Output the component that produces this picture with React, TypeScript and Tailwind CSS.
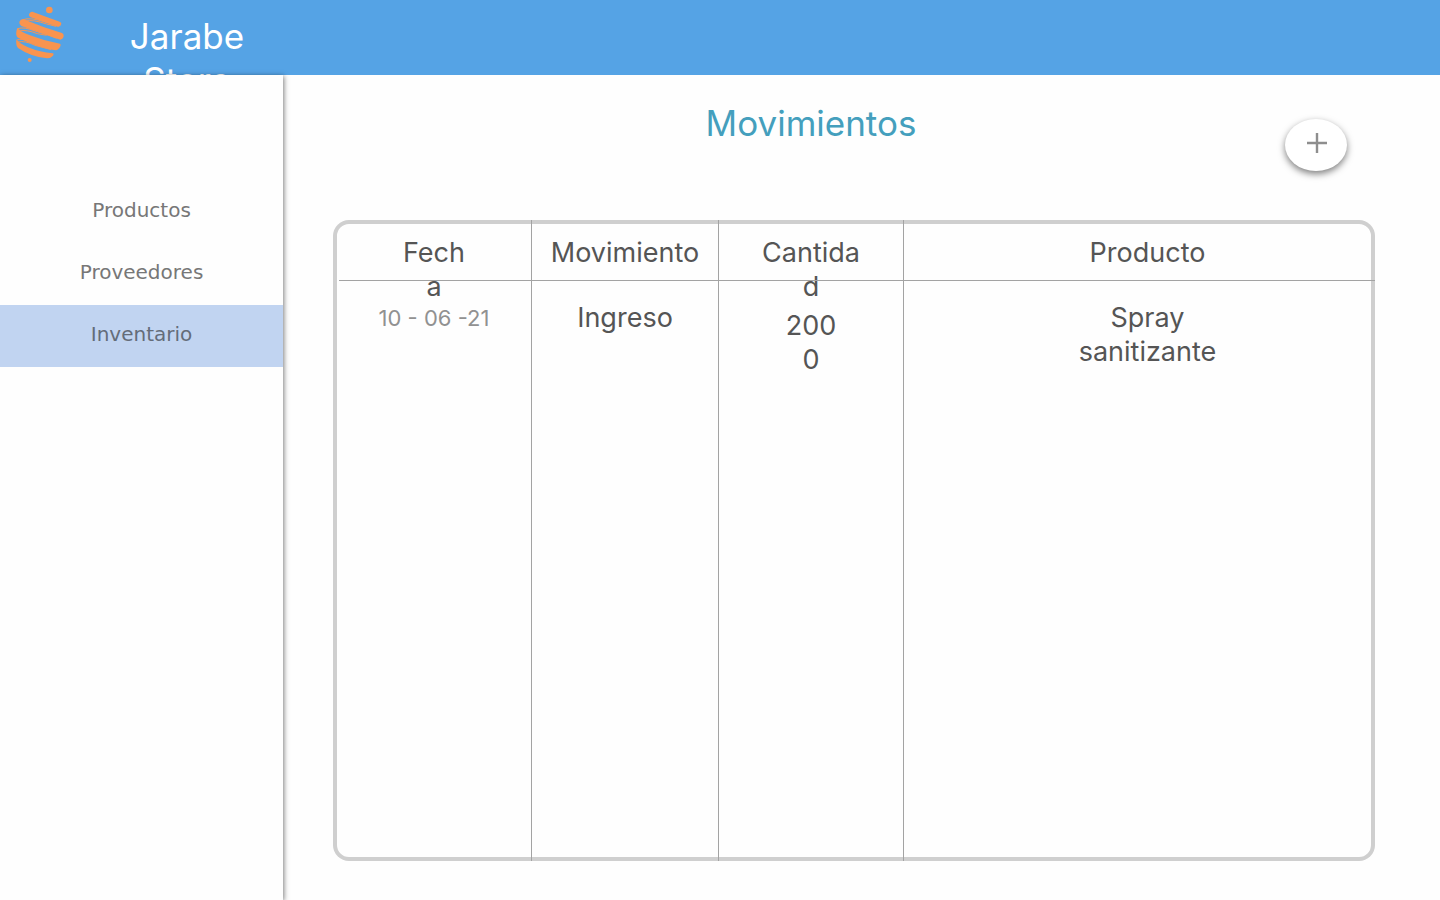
import type { ReactNode } from "react";

const navItems = [
  { label: "Productos", active: false },
  { label: "Proveedores", active: false },
  { label: "Inventario", active: true },
];

function Logo() {
  return (
    <svg viewBox="45 18 150 168" className="h-14 w-[50px] shrink-0" aria-hidden="true">
      <g fill="#f9944f">
        <circle cx="148" cy="30" r="10" />
        <circle cx="89" cy="180" r="6" />
        <path d="M97 35 L179 65 Q185 67 184 72 Q182 81 173 80 Q132 66 92 52 Q86 49 87 43 Q90 34 97 35Z" />
        <path d="M69 57 Q128 82 186 99 Q192 102 191 109 Q188 119 181 119 Q120 98 64 78 Q57 74 58 65 Q62 57 69 57Z" />
        <path d="M53 83 Q60 95 90 106 Q135 124 180 131 Q184 133 181 139 Q176 150 167 151 Q112 142 54 113 Q47 107 49 95 Q50 86 53 83Z" />
        <path d="M49 118 Q57 131 84 142 Q120 157 159 160 Q163 161 159 167 Q152 175 141 175 Q94 171 54 144 Q47 137 49 118Z" />
      </g>
      <g fill="none" stroke="#f9944f" strokeWidth="3">
        <path d="M69 59 Q90 51 135 66 Q160 74 176 78" />
        <path d="M76 63 Q100 58 140 72 L168 79" />
        <path d="M54 86 Q70 79 108 94 Q145 104 170 115" />
        <path d="M57 93 Q80 88 112 101 L140 106" />
        <path d="M51 120 Q65 114 94 125 Q130 138 165 149" />
        <path d="M54 126 Q75 121 105 136 L154 149" />
      </g>
    </svg>
  );
}

function HeaderCell({ children, className }: { children: ReactNode; className: string }) {
  return (
    <th
      scope="col"
      className={`relative h-[61px] pt-4 align-top font-normal after:absolute after:right-0 after:bottom-0 after:h-px after:bg-[#a3a3a3] ${className}`}
    >
      {children}
    </th>
  );
}

export default function App() {
  return (
    <div className="flex min-h-screen flex-col bg-[#fefefe] font-['Inter','Liberation_Sans',sans-serif]">
      <header className="flex h-[75px] items-start bg-[#55a3e5] pl-[15px]">
        <div className="pt-1.5">
          <Logo />
        </div>
        <div className="ml-[57px] w-[130px] pt-3.5 text-center text-[35px] leading-[44px] text-white">
          Jarabe Store
        </div>
      </header>

      <div className="flex flex-1">
        <nav
          aria-label="Principal"
          className="relative z-10 w-[283px] shrink-0 bg-[#fefefe] pt-[106px] font-['DejaVu_Sans',sans-serif] shadow-[1px_1px_5px_rgba(0,0,0,0.5)]"
        >
          <ul>
            {navItems.map((item) => (
              <li key={item.label}>
                <a
                  href="#"
                  aria-current={item.active ? "page" : undefined}
                  className={`flex h-[62px] items-center justify-center pb-1 text-[20px] ${
                    item.active ? "bg-[#c1d4f1] text-[#646c79]" : "text-[#777777]"
                  }`}
                >
                  {item.label}
                </a>
              </li>
            ))}
          </ul>
        </nav>

        <main className="flex min-w-0 flex-1 flex-col pr-[65px] pb-[39px] pl-[50px]">
          <div className="flex h-[145px] items-start pr-7">
            <h1 className="flex-1 pt-6 pl-1 text-center text-[35px] leading-[48px] text-[#449fbd]">
              Movimientos
            </h1>
            <button
              type="button"
              aria-label="Agregar movimiento"
              className="mt-11 flex h-[52px] w-[62px] items-center justify-center rounded-[50%] bg-white pb-1 pl-0.5 shadow-[0_3px_7px_rgba(0,0,0,0.5)]"
            >
              <svg viewBox="0 0 20 20" className="size-5" fill="none" stroke="#8e8e8e" strokeWidth="2.4" aria-hidden="true">
                <path d="M10 0V20M0 10H20" />
              </svg>
            </button>
          </div>

          <div className="flex flex-1 rounded-2xl inset-ring-4 inset-ring-[#cfcfcf]">
            <table className="w-full table-fixed border-separate border-spacing-0 text-center text-[27px] leading-[34px] text-[#555555]">
              <colgroup>
                <col className="w-[199px]" />
                <col className="w-[187px]" />
                <col className="w-[185px]" />
                <col />
              </colgroup>
              <thead>
                <tr>
                  <HeaderCell className="border-r border-[#a3a3a3] pl-1 after:left-1.5">
                    <div className="mx-auto h-11 w-[70px] break-all">Fecha</div>
                  </HeaderCell>
                  <HeaderCell className="border-r border-[#a3a3a3] after:left-0">
                    <div className="h-11">Movimiento</div>
                  </HeaderCell>
                  <HeaderCell className="border-r border-[#a3a3a3] after:left-0">
                    <div className="mx-auto h-11 w-[108px] break-all">Cantidad</div>
                  </HeaderCell>
                  <HeaderCell className="pl-4 after:left-0">
                    <div className="h-11">Producto</div>
                  </HeaderCell>
                </tr>
              </thead>
              <tbody>
                <tr className="align-top">
                  <td className="border-r border-[#a3a3a3] pt-5 pl-1 text-[22px] text-[#919191]">
                    10 - 06 -21
                  </td>
                  <td className="border-r border-[#a3a3a3] pt-5">Ingreso</td>
                  <td className="border-r border-[#a3a3a3] pt-7">
                    <div className="mx-auto w-[60px] break-all">2000</div>
                  </td>
                  <td className="pt-5 pl-4">
                    <div className="mx-auto w-[160px]">Spray sanitizante</div>
                  </td>
                </tr>
              </tbody>
            </table>
          </div>
        </main>
      </div>
    </div>
  );
}
